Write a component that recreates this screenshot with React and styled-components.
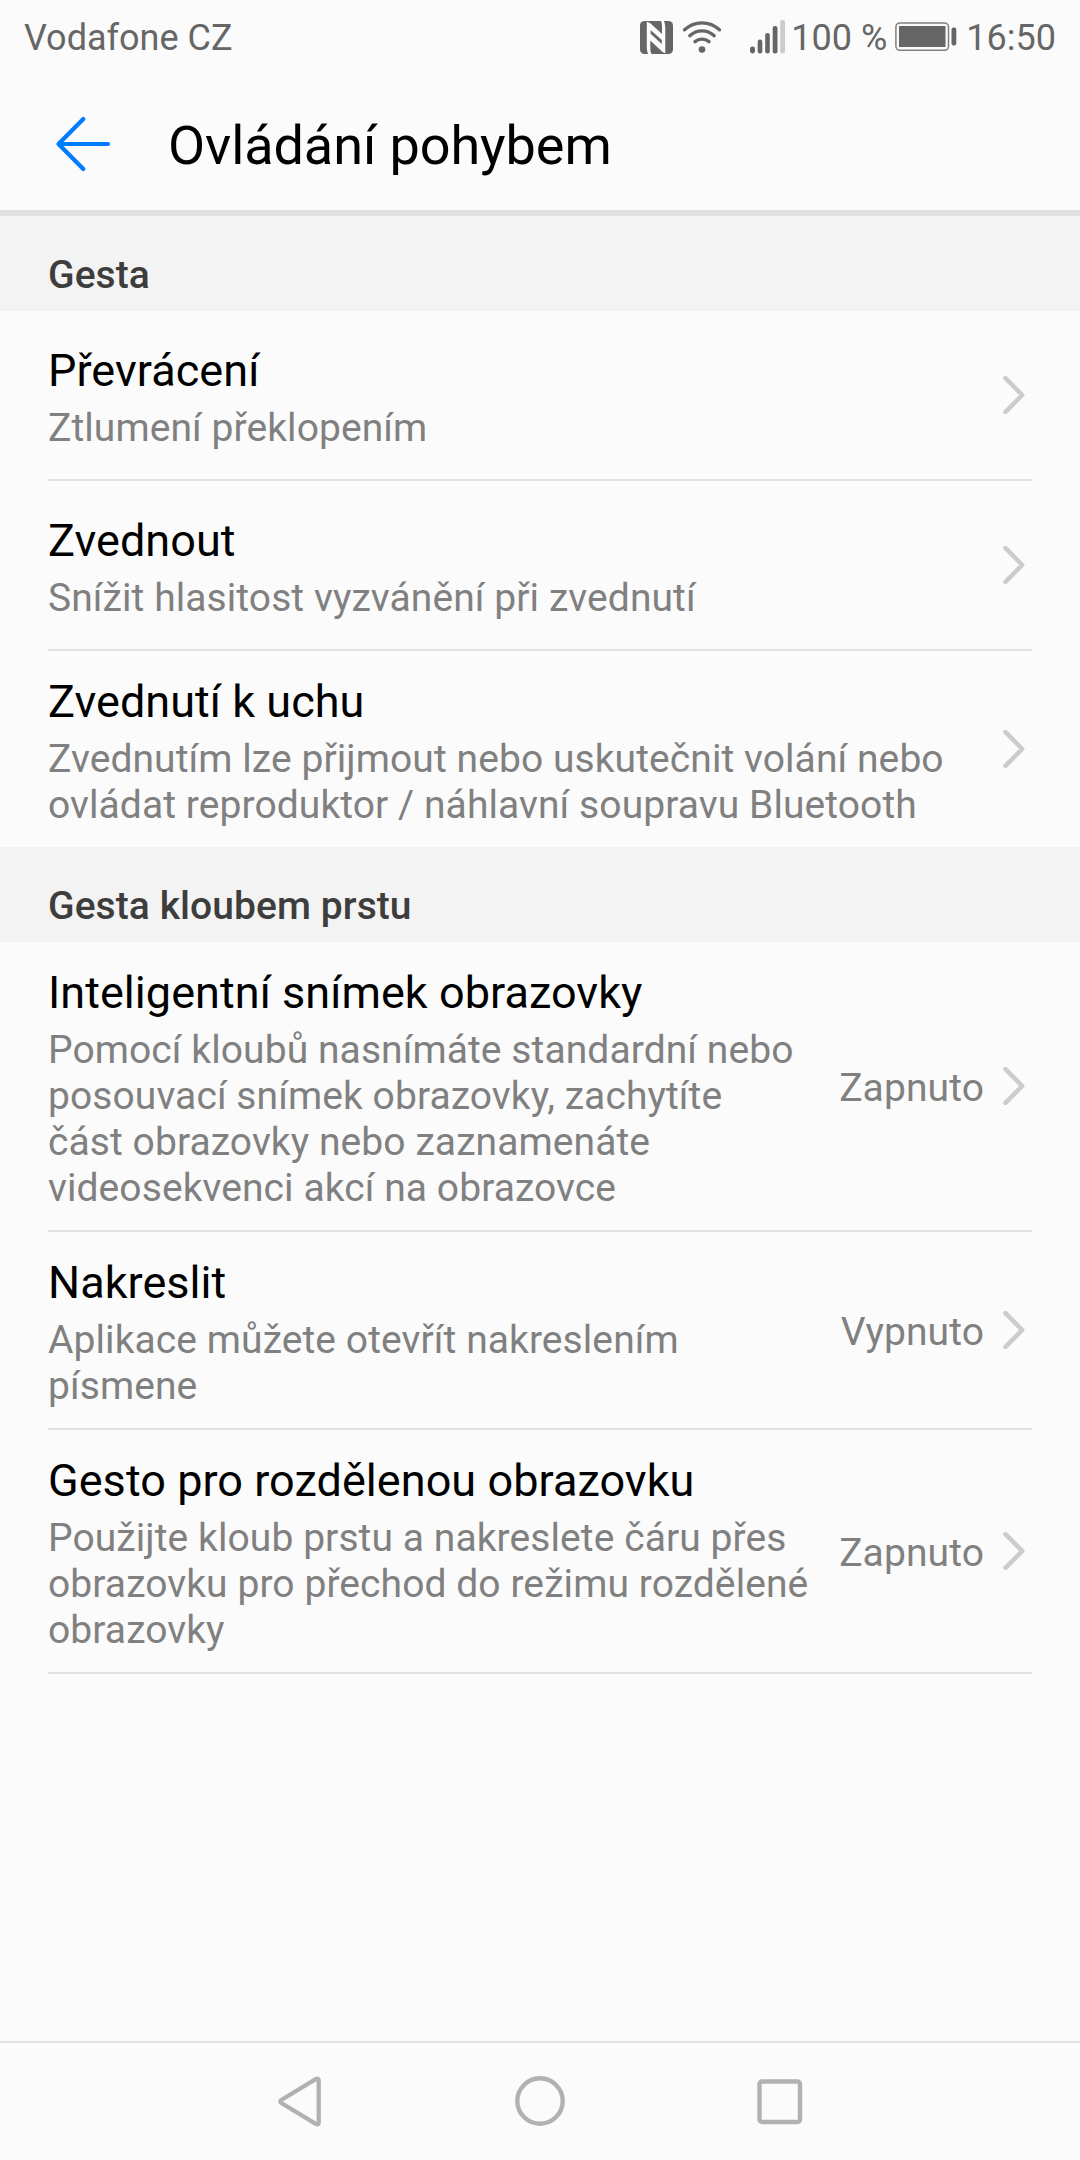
import React from "react";
import styled, { createGlobalStyle } from "styled-components";

const GlobalStyle = createGlobalStyle`
  *, *::before, *::after { box-sizing: border-box; }
  body {
    margin: 0;
    background: #fbfbfb;
    font-family: Roboto, "Noto Sans", sans-serif;
  }
  svg { display: block; flex: none; }
`;

const Screen = styled.div`
  display: flex;
  flex-direction: column;
  width: 1080px;
  height: 2160px;
  background: #fbfbfb;
  overflow: hidden;
`;

const StatusBar = styled.div`
  display: flex;
  align-items: center;
  justify-content: space-between;
  height: 72px;
  padding: 2px 24px 0;
  font-size: 36px;
  line-height: 44px;
  color: #666;
  white-space: nowrap;
`;

const StatusIcons = styled.div`
  display: flex;
  align-items: center;
`;

const StatusText = styled.span`
  margin-top: 1px;
  margin-left: ${(p) => p.$gap || 0}px;
`;

const StatusGlyph = styled.svg`
  margin-left: ${(p) => p.$gap || 0}px;
`;

const Toolbar = styled.header`
  display: flex;
  align-items: center;
  height: 144px;
  padding: 5px 54px 0;
  border-bottom: 6px solid #e1e1e1;
`;

const Title = styled.h1`
  margin: 5px 0 0 57px;
  font-size: 54px;
  font-weight: 400;
  line-height: 64px;
  letter-spacing: -0.08px;
  color: #000;
`;

const SectionHeader = styled.h2`
  height: 95px;
  margin: 0;
  padding: 36px 48px 0;
  background: #f3f3f3;
  color: #3d3d3d;
  font-size: 39px;
  font-weight: 500;
  line-height: 46px;
  letter-spacing: 0.07px;
`;

const Row = styled.div`
  display: flex;
  align-items: center;
  min-height: ${(p) => (p.$divider ? 170 : 168)}px;
  margin: 0 48px;
  border-bottom: ${(p) => (p.$divider ? "2px solid #e1e1e1" : "none")};
`;

const RowText = styled.div`
  flex: 1;
  min-width: 0;
  padding: 24px 0 19px;
`;

const RowTitle = styled.div`
  margin-bottom: 8px;
  font-size: 45px;
  line-height: 53px;
  letter-spacing: 0.05px;
  color: #000;
`;

const RowSummary = styled.div`
  font-size: 39px;
  line-height: 46px;
  letter-spacing: 0.08px;
  white-space: pre-line;
  color: #808080;
`;

const RowValue = styled.div`
  margin: 4px 0 0 24px;
  font-size: 39px;
  line-height: 46px;
  letter-spacing: 0.1px;
  color: #808080;
`;

const ChevronIcon = styled.svg`
  margin: 0 7px 0 17px;
`;

const Spacer = styled.div`
  flex: 1;
`;

const NavBar = styled.nav`
  display: flex;
  align-items: flex-start;
  justify-content: center;
  gap: 180px;
  height: 119px;
  padding-top: 28px;
  border-top: 2px solid #e1e1e1;
`;

const Chevron = () => (
  <ChevronIcon width="24" height="40" viewBox="0 0 24 40" fill="none">
    <path d="M4.5 3.2 21.2 20 4.5 36.8" stroke="#cccccc" strokeWidth="4.6" strokeLinecap="round" strokeLinejoin="round" />
  </ChevronIcon>
);

function SettingRow({ title, summary, value, divider = true }) {
  return (
    <Row $divider={divider}>
      <RowText>
        <RowTitle>{title}</RowTitle>
        <RowSummary>{summary}</RowSummary>
      </RowText>
      {value && <RowValue>{value}</RowValue>}
      <Chevron />
    </Row>
  );
}

const sections = [
  {
    name: "Gesta",
    rows: [
      { title: "Převrácení", summary: "Ztlumení překlopením" },
      { title: "Zvednout", summary: "Snížit hlasitost vyzvánění při zvednutí" },
      {
        title: "Zvednutí k uchu",
        summary: "Zvednutím lze přijmout nebo uskutečnit volání nebo ovládat reproduktor / náhlavní soupravu Bluetooth",
        divider: false,
      },
    ],
  },
  {
    name: "Gesta kloubem prstu",
    rows: [
      {
        title: "Inteligentní snímek obrazovky",
        summary: "Pomocí kloubů nasnímáte standardní nebo posouvací snímek obrazovky, zachytíte\nčást obrazovky nebo zaznamenáte videosekvenci akcí na obrazovce",
        value: "Zapnuto",
      },
      {
        title: "Nakreslit",
        summary: "Aplikace můžete otevřít nakreslením písmene",
        value: "Vypnuto",
      },
      {
        title: "Gesto pro rozdělenou obrazovku",
        summary: "Použijte kloub prstu a nakreslete čáru přes obrazovku pro přechod do režimu rozdělené obrazovky",
        value: "Zapnuto",
      },
    ],
  },
];

export default function App() {
  return (
    <>
      <GlobalStyle />
      <Screen>
        <StatusBar>
          <StatusText>Vodafone CZ</StatusText>
          <StatusIcons>
            <StatusGlyph width="33" height="33" viewBox="0 0 33 33">
              <rect width="33" height="33" rx="4.5" fill="#666" />
              <path d="M6.800 .8 10 2 22 13V6C22 3.500 21.800 2 21 0H23.800C25 2 25.300 4.500 25.300 8V32.300L22.500 31 10.300 19.500V27C10.300 29.500 10.600 31 11.500 33H8.300C7 31 6.800 28.500 6.800 25Z" fill="#fbfbfb" />
              <path d="M10.600 9.200 21.800 19.300V23.300L10.600 13Z" fill="#666" transform="translate(0 -.2)" />
            </StatusGlyph>
            <StatusGlyph $gap={9} width="40" height="33" viewBox="0 0 40 33" fill="none" stroke="#666" strokeWidth="3.400" strokeLinecap="round">
              <path d="M2.500 8.800C12.500-.5 27.500-.5 37.500 8.800M7.800 14.700C15 8.300 25 8.300 32.200 14.700M13 20.600C17 17.300 23 17.300 27 20.600" />
              <circle cx="20" cy="28.500" r="3.300" fill="#666" stroke="none" />
            </StatusGlyph>
            <StatusGlyph $gap={28} width="35" height="34" viewBox="0 0 35 34" fill="#666">
              <rect x="0" y="26.500" width="5" height="7" rx="2.400" />
              <rect x="7.700" y="19.500" width="4.600" height="14" rx="2.200" />
              <rect x="15.200" y="13" width="4.600" height="20.500" rx="2.200" />
              <rect x="22.700" y="6" width="4.800" height="27.500" rx="2.200" />
              <rect x="30.200" y="0" width="4.800" height="33.500" rx="2.200" fill="#ccc" />
            </StatusGlyph>
            <StatusText $gap={6}>100 %</StatusText>
            <StatusGlyph $gap={8} width="62" height="30" viewBox="0 0 62 30">
              <rect x="0.900" y="0.900" width="52.600" height="27.400" rx="4" fill="none" stroke="#808080" strokeWidth="1.500" />
              <rect x="4" y="4" width="46.500" height="21" rx="0.500" fill="#666" />
              <rect x="56.500" y="5.500" width="4.800" height="18" rx="2" fill="#666" />
            </StatusGlyph>
            <StatusText $gap={9}>16:50</StatusText>
          </StatusIcons>
        </StatusBar>

        <Toolbar>
          <svg width="57" height="56" viewBox="0 0 57 56" fill="none" stroke="#007dff" strokeWidth="4.200" strokeLinecap="round" strokeLinejoin="round">
            <path d="M29.300 3 4.500 28 29.300 53M4.500 28H54" />
          </svg>
          <Title>Ovládání pohybem</Title>
        </Toolbar>

        {sections.map((section) => (
          <section key={section.name}>
            <SectionHeader>{section.name}</SectionHeader>
            {section.rows.map((row) => (
              <SettingRow key={row.title} {...row} />
            ))}
          </section>
        ))}

        <Spacer />

        <NavBar>
          <svg width="60" height="60" viewBox="0 0 60 60" fill="none" stroke="#b1b1b1" strokeWidth="4.300" strokeLinejoin="round">
            <path d="M45.700 8.200Q48.700 6.800 48.700 9.200V51.800Q48.700 54.200 45.700 52.800L11.300 32Q9.300 30.500 11.300 29Z" />
          </svg>
          <svg width="60" height="60" viewBox="0 0 60 60" fill="none" stroke="#b1b1b1" strokeWidth="4.400">
            <circle cx="30" cy="30" r="22.700" />
          </svg>
          <svg width="60" height="60" viewBox="0 0 60 60" fill="none" stroke="#b1b1b1" strokeWidth="4.400">
            <rect x="9.500" y="10.500" width="40.500" height="40.500" rx="2.500" />
          </svg>
        </NavBar>
      </Screen>
    </>
  );
}
